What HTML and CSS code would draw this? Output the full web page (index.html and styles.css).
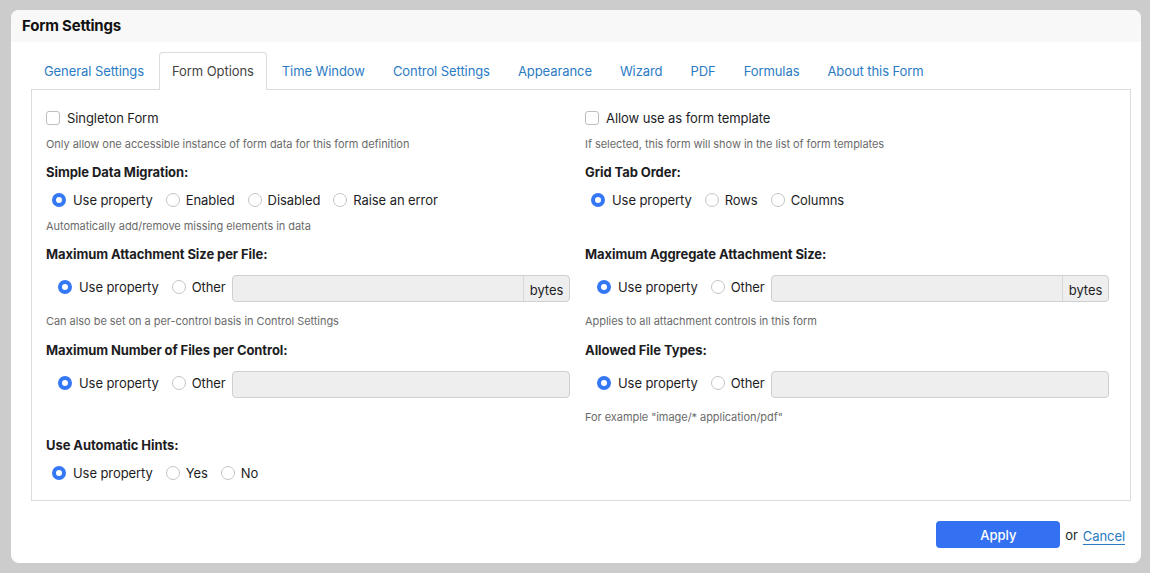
FILE: index.html
```html
<!DOCTYPE html>
<html>
<head>
<meta charset="utf-8">
<link rel="stylesheet" href="styles.css">
</head>
<body>
<div class="card">
  <div class="card-header">Form Settings</div>
  <div class="card-body">
    <ul class="tabs">
      <li class="tab"><a>General Settings</a></li>
      <li class="tab active"><a>Form Options</a></li>
      <li class="tab"><a>Time Window</a></li>
      <li class="tab"><a>Control Settings</a></li>
      <li class="tab"><a>Appearance</a></li>
      <li class="tab"><a>Wizard</a></li>
      <li class="tab"><a>PDF</a></li>
      <li class="tab"><a>Formulas</a></li>
      <li class="tab"><a>About this Form</a></li>
    </ul>
    <div class="panel">
      <div class="field">
        <label class="check"><span class="box"></span>Singleton Form</label>
        <div class="help">Only allow one accessible instance of form data for this form definition</div>
      </div>
      <div class="field">
        <label class="check"><span class="box"></span>Allow use as form template</label>
        <div class="help">If selected, this form will show in the list of form templates</div>
      </div>

      <div class="field">
        <div class="heading">Simple Data Migration:</div>
        <div class="radios">
          <label class="radio"><span class="dot on"></span>Use property</label>
          <label class="radio"><span class="dot"></span>Enabled</label>
          <label class="radio"><span class="dot"></span>Disabled</label>
          <label class="radio"><span class="dot"></span>Raise an error</label>
        </div>
        <div class="help">Automatically add/remove missing elements in data</div>
      </div>
      <div class="field">
        <div class="heading">Grid Tab Order:</div>
        <div class="radios">
          <label class="radio"><span class="dot on"></span>Use property</label>
          <label class="radio"><span class="dot"></span>Rows</label>
          <label class="radio"><span class="dot"></span>Columns</label>
        </div>
      </div>

      <div class="field">
        <div class="heading">Maximum Attachment Size per File:</div>
        <div class="input-row">
          <label class="radio"><span class="dot on"></span>Use property</label>
          <label class="radio other"><span class="dot"></span>Other</label>
          <div class="input-group"><div class="input"></div><div class="addon">bytes</div></div>
        </div>
        <div class="help">Can also be set on a per-control basis in Control Settings</div>
      </div>
      <div class="field">
        <div class="heading">Maximum Aggregate Attachment Size:</div>
        <div class="input-row">
          <label class="radio"><span class="dot on"></span>Use property</label>
          <label class="radio other"><span class="dot"></span>Other</label>
          <div class="input-group"><div class="input"></div><div class="addon">bytes</div></div>
        </div>
        <div class="help">Applies to all attachment controls in this form</div>
      </div>

      <div class="field">
        <div class="heading">Maximum Number of Files per Control:</div>
        <div class="input-row">
          <label class="radio"><span class="dot on"></span>Use property</label>
          <label class="radio other"><span class="dot"></span>Other</label>
          <div class="input-group"><div class="input"></div></div>
        </div>
      </div>
      <div class="field">
        <div class="heading">Allowed File Types:</div>
        <div class="input-row">
          <label class="radio"><span class="dot on"></span>Use property</label>
          <label class="radio other"><span class="dot"></span>Other</label>
          <div class="input-group"><div class="input"></div></div>
        </div>
        <div class="help">For example "image/* application/pdf"</div>
      </div>

      <div class="field">
        <div class="heading">Use Automatic Hints:</div>
        <div class="radios">
          <label class="radio"><span class="dot on"></span>Use property</label>
          <label class="radio"><span class="dot"></span>Yes</label>
          <label class="radio"><span class="dot"></span>No</label>
        </div>
      </div>
    </div>
    <div class="footer">
      <button class="apply">Apply</button>
      <span class="or">or</span>
      <a class="cancel">Cancel</a>
    </div>
  </div>
</div>
</body>
</html>
```

FILE: styles.css
```css
* { box-sizing: border-box; }
html, body { margin: 0; }
body {
  background: #cccccc;
  padding: 10px 9px 10px 11px;
  font-family: Inter, "Liberation Sans", Arial, sans-serif;
  font-size: 13px;
  letter-spacing: -0.08px;
  color: #1d1d1f;
}
.card {
  background: #fff;
  border-radius: 8px;
  height: 553px;
  overflow: hidden;
}
.card-header {
  height: 32px;
  line-height: 32px;
  background: #f8f8f8;
  padding: 0 11px;
  font-weight: 700;
  font-size: 15px;
  letter-spacing: -0.2px;
  color: #111;
}
.card-body {
  padding: 10px 10px 0 20px;
}
.tabs {
  list-style: none;
  margin: 0;
  padding: 0;
  display: flex;
  height: 37px;
  position: relative;
  z-index: 1;
}
.tab { margin-right: 2px; }
.tab a {
  display: block;
  height: 38px;
  line-height: 37px;
  padding: 0 12px;
  border: 1px solid transparent;
  border-bottom: none;
  border-radius: 4px 4px 0 0;
  color: #2b7bc4;
  letter-spacing: -0.08px;
}
.tab.active a {
  border-color: #dcdcdc;
  background: #fff;
  color: #444;
}
.panel {
  border: 1px solid #dcdcdc;
  padding: 18px 14px 17px 14px;
  display: grid;
  grid-template-columns: 524px 524px;
  column-gap: 15px;
  row-gap: 10px;
  height: 412px;
}
.field { display: flex; flex-direction: column; align-items: flex-start; }
.check {
  display: flex;
  align-items: center;
  height: 20px;
  line-height: 20px;
}
.box {
  width: 14px;
  height: 14px;
  border: 1px solid #bdbdbd;
  border-radius: 3px;
  margin-right: 7px;
  background: #fff;
}
.help {
  margin-top: 8px;
  font-size: 11px;
  line-height: 16px;
  color: #6b6b6b;
  letter-spacing: -0.05px;
}
.heading {
  font-weight: 700;
  line-height: 20px;
}
.radios {
  margin-top: 8px;
  display: flex;
  padding-left: 6px;
  height: 20px;
}
.radio {
  display: flex;
  align-items: center;
  line-height: 20px;
  margin-right: 13px;
}
.dot {
  width: 14px;
  height: 14px;
  border-radius: 50%;
  border: 1px solid #c4c4c4;
  background: #fff;
  margin-right: 6px;
}
.dot.on {
  border: 4px solid #3478f6;
  background: #fff;
  margin-right: 7px;
}
.input-row {
  margin-top: 11px;
  display: flex;
  align-items: center;
  width: 100%;
  padding-left: 12px;
  height: 27px;
}
.input-row .radio { margin-top: -3px; }
.input-row .other { margin-right: 6px; }
.input-group {
  flex: 1;
  display: flex;
  height: 27px;
  border: 1px solid #cfcfcf;
  border-radius: 4px;
  background: #eeeeee;
}
.input-row + .help { margin-top: 11px; }
.input { flex: 1; }
.addon {
  width: 46px;
  border-left: 1px solid #d8d8d8;
  line-height: 25px;
  padding-top: 2px;
  text-align: center;
  color: #1d1d1f;
}
.footer {
  display: flex;
  justify-content: flex-end;
  align-items: center;
  margin-top: 20px;
  padding-right: 6px;
}
.apply {
  width: 124px;
  height: 27px;
  background: #3371f2;
  color: #fff;
  border: none;
  border-radius: 4px;
  font-family: inherit;
  font-size: 13px;
  font-weight: 500;
}
.or { margin: 0 5px; }
.cancel {
  color: #2b7bc4;
  text-decoration: underline;
  text-underline-offset: 3px;
  margin-top: 2px;
}
```
